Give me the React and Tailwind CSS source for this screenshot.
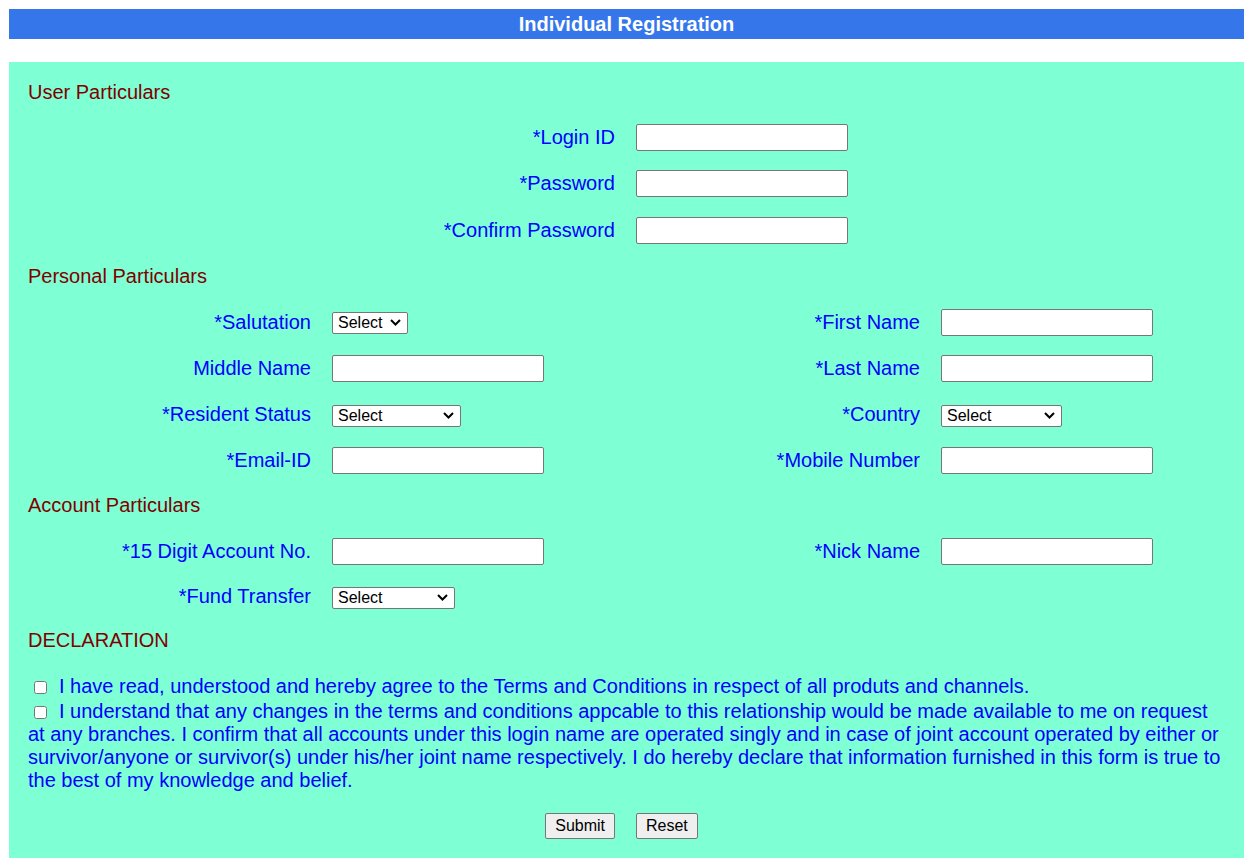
import React from 'react';

const font = { fontFamily: '"Liberation Sans", Arial, sans-serif' };

function TextBox() {
  return (
    <input
      type="text"
      className="w-[212px] h-[27px] bg-white border border-[#767676] rounded-[2px] px-[3px] text-[16px] text-black outline-none"
    />
  );
}

function SelectBox({ width }) {
  return (
    <div className={`relative h-[22px] ${width}`}>
      <select className="appearance-none w-full h-full bg-white border border-[#767676] rounded-[2px] pl-[5px] pr-[20px] text-[16px] leading-[20px] text-black outline-none">
        <option>Select</option>
      </select>
      <svg
        className="absolute right-[7px] top-[8px] pointer-events-none"
        width="11"
        height="7"
        viewBox="0 0 11 7"
      >
        <path d="M1 1 L5.5 5.5 L10 1" fill="none" stroke="#000" strokeWidth="2" />
      </svg>
    </div>
  );
}

function Label({ children }) {
  return <div className="text-right pr-[21px] text-[20px] leading-[23px] text-[#0000ff]">{children}</div>;
}

function Heading({ children, h = 'h-[45px]' }) {
  return <div className={`${h} flex items-center text-[20px] leading-[23px] text-[#800000]`}>{children}</div>;
}

// single label + field, used in the user particulars block
function UserRow({ label, h }) {
  return (
    <div className={`grid grid-cols-[608px_1fr] items-center ${h}`}>
      <Label>{label}</Label>
      <div><TextBox /></div>
    </div>
  );
}

// two label/field pairs on one line
function PairRow({ h, left, leftField, right, rightField }) {
  return (
    <div className={`grid grid-cols-[304px_288px_321px_1fr] items-center ${h}`}>
      <Label>{left}</Label>
      <div>{leftField}</div>
      {right ? <Label>{right}</Label> : <div />}
      <div>{rightField}</div>
    </div>
  );
}

export default function App() {
  return (
    <div style={font} className="bg-white min-h-[867px] pl-[9px] pr-[8px] pt-[9px]">
      <div className="h-[30px] bg-[#3576eb] text-white font-bold text-[20px] leading-[30px] text-center">
        Individual Registration
      </div>

      <div className="mt-[23px] bg-[#7fffd4] pt-[7px] pb-[19px] px-[19px]">
        <Heading h="h-[46px]">User Particulars</Heading>
        <UserRow label="*Login ID" h="h-[45px]" />
        <UserRow label="*Password" h="h-[47px]" />
        <UserRow label="*Confirm Password" h="h-[47px]" />

        <Heading>Personal Particulars</Heading>
        <PairRow
          h="h-[46px]"
          left="*Salutation"
          leftField={<SelectBox width="w-[76px]" />}
          right="*First Name"
          rightField={<TextBox />}
        />
        <PairRow
          h="h-[47px]"
          left="Middle Name"
          leftField={<TextBox />}
          right="*Last Name"
          rightField={<TextBox />}
        />
        <PairRow
          h="h-[45px]"
          left="*Resident Status"
          leftField={<SelectBox width="w-[129px]" />}
          right="*Country"
          rightField={<SelectBox width="w-[121px]" />}
        />
        <PairRow
          h="h-[46px]"
          left="*Email-ID"
          leftField={<TextBox />}
          right="*Mobile Number"
          rightField={<TextBox />}
        />

        <Heading>Account Particulars</Heading>
        <PairRow
          h="h-[46px]"
          left="*15 Digit Account No."
          leftField={<TextBox />}
          right="*Nick Name"
          rightField={<TextBox />}
        />
        <PairRow
          h="h-[45px]"
          left="*Fund Transfer"
          leftField={<SelectBox width="w-[123px]" />}
        />

        <Heading h="h-[42px]">DECLARATION</Heading>

        <div className="mt-[14px] text-[20px] leading-[23px] text-[#0000ff]">
          <p>
            <input type="checkbox" className="ml-[6px] mr-[12px] w-[13px] h-[13px] align-[-1px]" />
            I have read, understood and hereby agree to the Terms and Conditions in respect of all produts and channels.
          </p>
          <p className="mt-[2px]">
            <input type="checkbox" className="ml-[6px] mr-[12px] w-[13px] h-[13px] align-[-1px]" />
            I understand that any changes in the terms and conditions appcable to this relationship would be made available to me on request at any branches. I confirm that all accounts under this login name are operated singly and in case of joint account operated by either or survivor/anyone or survivor(s) under his/her joint name respectively. I do hereby declare that information furnished in this form is true to the best of my knowledge and belief.
          </p>
        </div>

        <div className="mt-[21px] grid grid-cols-[608px_1fr]">
          <div className="flex justify-end pr-[21px]">
            <button className="h-[26px] px-[9px] bg-[#efefef] border border-[#767676] rounded-[2px] text-[16px] text-black">
              Submit
            </button>
          </div>
          <div>
            <button className="h-[26px] px-[9px] bg-[#efefef] border border-[#767676] rounded-[2px] text-[16px] text-black">
              Reset
            </button>
          </div>
        </div>
      </div>
    </div>
  );
}
